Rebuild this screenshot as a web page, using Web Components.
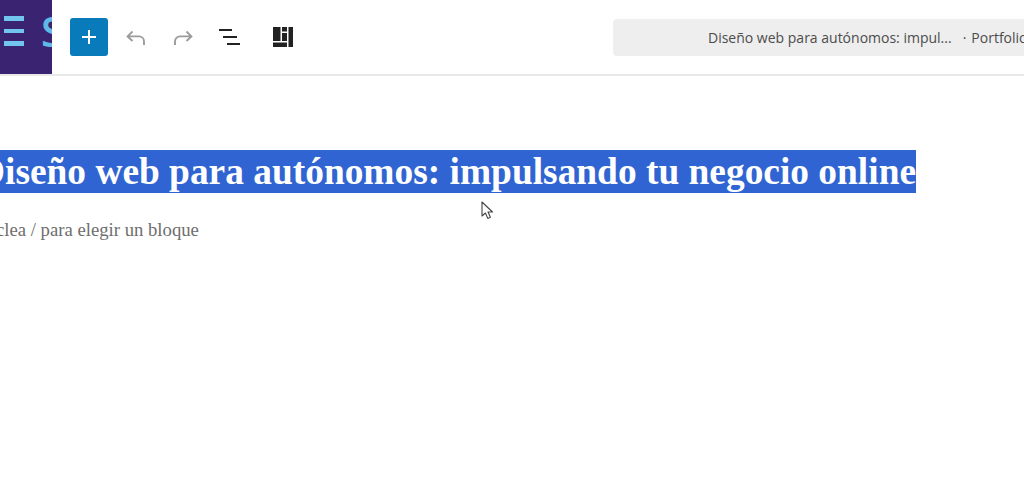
<!DOCTYPE html>
<html lang="es">
<head>
<meta charset="utf-8">
<title>Editor</title>
<style>
  html, body { margin: 0; height: 100%; background: #fff; overflow: hidden; }
  body { font-family: "Open Sans", "Liberation Sans", sans-serif; }
</style>
</head>
<body>
<editor-app>
  <editor-toolbar slot="bar"></editor-toolbar>
  <editor-canvas>
    <post-title>Diseño web para autónomos: impulsando tu negocio online</post-title>
    <block-hint>clea / para elegir un bloque</block-hint>
  </editor-canvas>
  <mouse-cursor></mouse-cursor>
</editor-app>

<script>
class EditorApp extends HTMLElement {
    constructor() {
        super();
        this.attachShadow({ mode: "open" }).innerHTML = `
            <style>
            :host { display: flex; flex-direction: column; position: relative; width: 1024px; height: 497px; overflow: hidden; background: #fff; }
            </style>
            <slot name="bar"></slot>
            <slot></slot>
        `;
    }
}

class EditorToolbar extends HTMLElement {
    constructor() {
        super();
        this.attachShadow({ mode: "open" }).innerHTML = `
            <style>
            :host { display: flex; align-items: stretch; height: 74px; border-bottom: 2px solid #e9e9e9; flex: none; }
            .logo { width: 52px; flex: none; background: #3a2370; display: flex; align-items: center; overflow: hidden; gap: 17px; padding-left: 4px; box-sizing: border-box; }
            .logo .bars { width: 20px; flex: none; display: flex; flex-direction: column; gap: 8px; margin-top: -12px; }
            .logo .bars i { display: block; height: 4.5px; background: #72c6ee; }
            .logo .s { font: 600 41px "Open Sans", sans-serif; color: #5fb8e6; line-height: 1; margin-top: -12px; }
            .tools { display: flex; align-items: center; padding-left: 18px; }
            .add { width: 38px; height: 38px; border-radius: 3px; background: #0a7bba; display: flex; align-items: center; justify-content: center; }
            .tool { width: 24px; height: 24px; display: block; }
            .undo { margin-left: 16px; }
            .redo { margin-left: 23px; }
            .list { margin-left: 23px; }
            .grid { margin-left: 29px; }
            .doc { margin-left: auto; align-self: center; width: 411px; height: 37px; box-sizing: border-box; background: #eeeeee; border-radius: 4px 0 0 4px; font-size: 14px; color: #4c4c4c; white-space: nowrap; overflow: hidden; padding-left: 95px; line-height: 37px; }
            .doc span { margin: 0 5px 0 11px; }
            </style>
            <div class="logo">
                <div class="bars"><i></i><i></i><i></i></div>
                <span class="s">S</span>
            </div>
            <div class="tools">
                <div class="add">
                    <svg width="24" height="24" viewBox="0 0 24 24"><path d="M11 5h2v6h6v2h-6v6h-2v-6H5v-2h6z" fill="#fff"/></svg>
                </div>
                <svg class="tool undo" viewBox="0 0 24 24" fill="none" stroke="#9b9b9b" stroke-width="1.9"><path d="M8.5 6.5 3.6 11.4l4.9 4.6M3.8 11.4h11.2a5 5 0 0 1 5 5v3.6"/></svg>
                <svg class="tool redo" viewBox="0 0 24 24" fill="none" stroke="#9b9b9b" stroke-width="1.9"><path d="M15.5 6.5l4.9 4.9-4.9 4.6M20.2 11.4H9a5 5 0 0 0-5 5v3.6"/></svg>
                <svg class="tool list" viewBox="0 0 24 24" fill="#222"><path d="M1 4h13v2H1zM5 11h14v2H5zM9 18h13v2H9z"/></svg>
                <svg class="tool grid" viewBox="0 0 24 24" fill="#222"><path d="M2 2h7.500v14H2zM11 2h5v4.500h-5zM11 8h5v8h-5zM17.500 2H22v20h-4.500zM2 17.500h14V22H2z"/></svg>
            </div>
            <div class="doc">Diseño web para autónomos: impul...<span>·</span>Portfolio</div>
        `;
    }
}

class EditorCanvas extends HTMLElement {
    constructor() {
        super();
        this.attachShadow({ mode: "open" }).innerHTML = `
            <style>
            :host { display: block; flex: 1; padding-top: 74px; white-space: nowrap; }
            </style>
            <slot></slot>
        `;
    }
}

class PostTitle extends HTMLElement {
    constructor() {
        super();
        this.attachShadow({ mode: "open" }).innerHTML = `
            <style>
            :host { display: block; margin-left: -22px; font: 700 37.4px/43px "Liberation Serif", serif; color: #fff; }
            span { background: #3064d2; display: inline-block; height: 43px; }
            </style>
            <span><slot></slot></span>
        `;
    }
}

class BlockHint extends HTMLElement {
    constructor() {
        super();
        this.attachShadow({ mode: "open" }).innerHTML = `
            <style>
            :host { display: block; font: 18.7px/22px "Liberation Serif", serif; color: #6e6e6e; margin-top: 26px; margin-left: -4px; }
            </style>
            <slot></slot>
        `;
    }
}

// pointer recorded in the capture, floats over the page
class MouseCursor extends HTMLElement {
    constructor() {
        super();
        this.attachShadow({ mode: "open" }).innerHTML = `
            <style>
            :host { position: absolute; left: 481px; top: 201px; width: 14px; height: 20px; }
            </style>
            <svg width="14" height="20" viewBox="0 0 14 20"><path d="M1 1v14l3.4-3 2.4 5.4 2.6-1.1-2.4-5.3H11.500z" fill="#fff" stroke="#444" stroke-width="1.1" stroke-linejoin="round"/></svg>
        `;
    }
}

customElements.define("editor-app", EditorApp);
customElements.define("editor-toolbar", EditorToolbar);
customElements.define("editor-canvas", EditorCanvas);
customElements.define("post-title", PostTitle);
customElements.define("block-hint", BlockHint);
customElements.define("mouse-cursor", MouseCursor);
</script>
</body>
</html>
